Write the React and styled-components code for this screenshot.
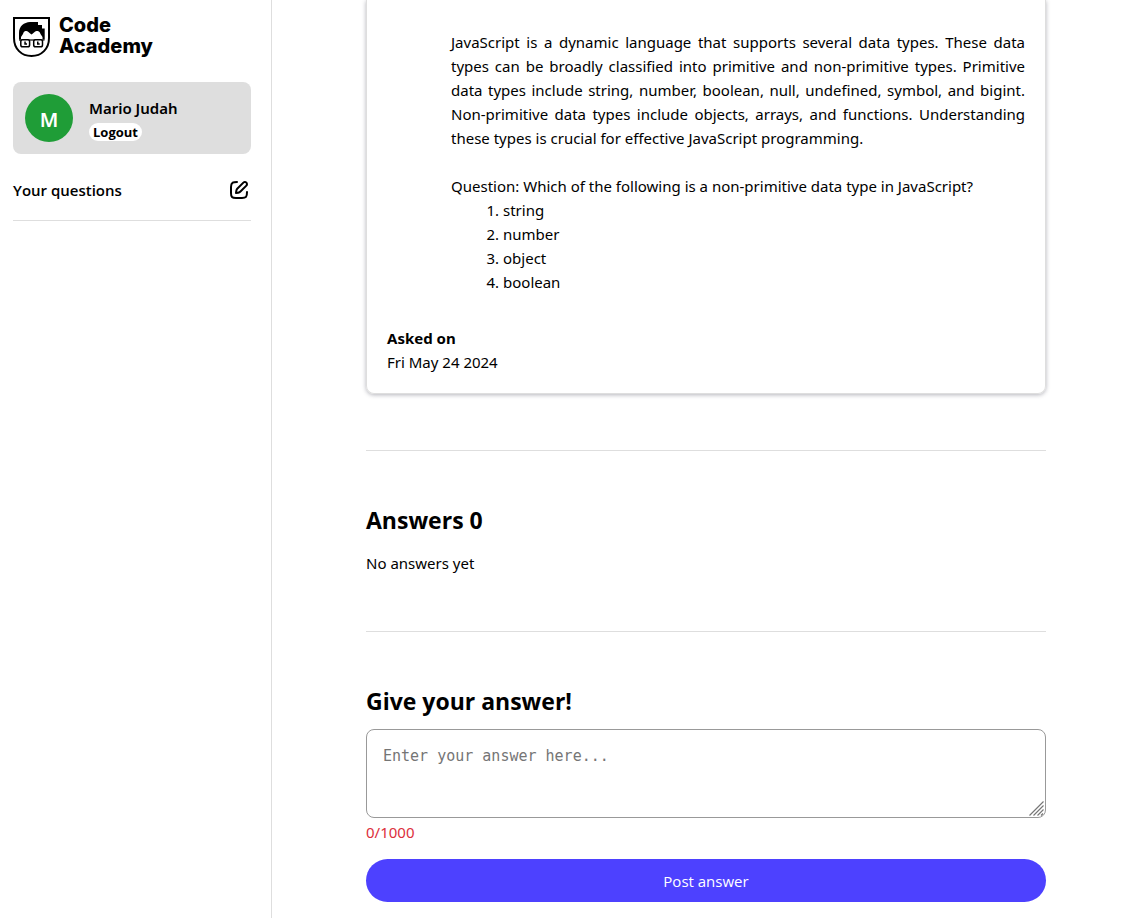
import React, { useState } from "react";
import styled, { createGlobalStyle } from "styled-components";

const GlobalStyle = createGlobalStyle`
  *, *::before, *::after { box-sizing: border-box; }
  body {
    margin: 0;
    background: #fff;
    color: #000;
    font-family: "Segoe UI", "Noto Sans", "Open Sans", sans-serif;
    font-size: 15px;
    line-height: 24px;
  }
  h2, p, ol { margin: 0; }
  button { font-family: inherit; cursor: pointer; }
`;

const headingFont = `"Segoe UI", "Open Sans", "Noto Sans", sans-serif`;

const Page = styled.div`
  display: grid;
  grid-template-columns: 272px 1fr;
  min-height: 100vh;
`;

const Sidebar = styled.aside`
  padding: 15px 20px 0 13px;
  border-right: 1px solid #dedede;
`;

const Brand = styled.a`
  display: flex;
  align-items: flex-start;
  gap: 9px;
  height: 43px;
  color: #000;
  text-decoration: none;

  svg { margin-top: 1px; }
`;

const BrandName = styled.span`
  font-family: Inter, "Liberation Sans", sans-serif;
  font-size: 20px;
  font-weight: 800;
  line-height: 21px;
`;

const UserCard = styled.section`
  display: flex;
  align-items: center;
  gap: 16px;
  margin-top: 24px;
  padding: 12px;
  border-radius: 8px;
  background: #dedede;
`;

const Avatar = styled.span`
  display: flex;
  align-items: center;
  justify-content: center;
  width: 48px;
  height: 48px;
  padding-top: 3px;
  border-radius: 50%;
  background: #1f9d37;
  color: #fff;
  font-size: 20px;
  font-weight: 600;
`;

const UserInfo = styled.div`
  display: flex;
  flex-direction: column;
  align-items: flex-start;
  gap: 4px;
  padding-top: 1px;
`;

const UserName = styled.span`
  font-weight: 600;
  line-height: 22px;
`;

const LogoutButton = styled.button`
  padding: 0 4px;
  border: 0;
  border-radius: 9px;
  background: #fff;
  color: #000;
  font-family: ${headingFont};
  font-size: 13px;
  font-weight: 700;
  line-height: 18px;
`;

const QuestionsHeader = styled.div`
  display: flex;
  align-items: center;
  justify-content: space-between;
  margin-top: 24px;
  padding-bottom: 18px;
  border-bottom: 1px solid #dedede;
`;

const SectionLabel = styled.span`
  font-family: ${headingFont};
  font-weight: 600;
`;

const IconButton = styled.button`
  display: flex;
  padding: 0;
  border: 0;
  background: none;
  color: #000;
`;

const Main = styled.main`
  padding: 0 23px 16px 24px;
`;

const Content = styled.div`
  max-width: 680px;
  margin: 0 auto;
`;

const QuestionCard = styled.article`
  padding: 30px 20px 19px;
  border: 1px solid #dedede;
  border-top: 0;
  border-radius: 0 0 8px 8px;
  box-shadow: 0 1px 4px rgba(40, 40, 60, 0.35);
`;

const QuestionBody = styled.div`
  display: flex;
  flex-direction: column;
  padding-left: 64px;
  text-align: justify;
`;

const Prompt = styled.p`
  margin-top: 24px;
`;

const Options = styled.ol`
  padding-left: 52px;
`;

const Asked = styled.p`
  display: flex;
  flex-direction: column;
  margin-top: 32px;
`;

const Divider = styled.hr`
  margin: 56px 0;
  border: 0;
  border-top: 1px solid #dedede;
`;

const Heading = styled.h2`
  margin-bottom: 18px;
  font-family: ${headingFont};
  font-size: 23px;
  font-weight: 700;
  line-height: 26px;
`;

const AnswerForm = styled.form`
  display: flex;
  flex-direction: column;
`;

const AnswerLabel = styled.label`
  margin-bottom: 15px;
  font-family: ${headingFont};
  font-size: 23px;
  font-weight: 700;
  line-height: 26px;
`;

const AnswerField = styled.div`
  position: relative;
  display: flex;
`;

const AnswerInput = styled.textarea`
  width: 100%;
  height: 89px;
  padding: 16px;
  border: 1px solid #999;
  border-radius: 8px;
  background: #fff;
  color: #000;
  font-family: Consolas, "DejaVu Sans Mono", monospace;
  font-size: 15px;
  line-height: 20px;
  resize: vertical;
  &::placeholder { color: #757575; }
  &::-webkit-resizer { background: transparent; }
`;

const Grip = styled.svg`
  position: absolute;
  right: 2px;
  bottom: 2px;
  pointer-events: none;
`;

const Counter = styled.span`
  margin: 2px 0 15px;
  color: #dc2f3c;
`;

const SubmitButton = styled.button`
  height: 43px;
  border: 0;
  border-radius: 22px;
  background: #4d41ff;
  color: #fff;
  font-family: ${headingFont};
  font-size: 15px;
`;

const options = ["string", "number", "object", "boolean"];

function Shield() {
  return (
    <svg width="37" height="41" viewBox="0 0 37 41" fill="none" aria-hidden="true">
      <path d="M1 2H36V22C36 33 28.500 40 18.500 40S1 33 1 22Z" stroke="#000" strokeWidth="2" />
      <path
        d="M6 23.500V17C6 10 11 6.500 17 6H25V9H29V12.500H31.700V23.500H29.500V21L27.500 18C27 15.500 25 15 23.500 15C21.500 15 20.500 17.500 18.500 18.500C16.500 17.500 15.500 15 13.500 15C12 15 10.500 15.500 10 18L8 21V23.500Z"
        fill="#000"
      />
      <path d="M6 24H31.500" stroke="#000" strokeWidth="1.200" />
      <rect x="7.800" y="23.800" width="8.800" height="7" rx="1.800" fill="#fff" stroke="#000" strokeWidth="1.500" />
      <rect x="20.700" y="23.800" width="8.800" height="7" rx="1.800" fill="#fff" stroke="#000" strokeWidth="1.500" />
      <path d="M11.300 25.500V28.800H14V27.300H12.800V25.500ZM24 25.500V28.800H26.700V27.300H25.500V25.500Z" fill="#000" />
    </svg>
  );
}

function ComposeIcon() {
  return (
    <svg width="24" height="24" viewBox="0 0 24 24" aria-hidden="true">
      <path
        fill="currentColor"
        fillRule="evenodd"
        d="M15.673 3.913C16.892 2.694 18.868 2.694 20.087 3.913C21.306 5.132 21.306 7.108 20.087 8.327L14.15 14.264C13.385 15.029 12.393 15.526 11.322 15.679L9.141 15.99C8.83 16.034 8.515 15.93 8.293 15.707C8.07 15.485 7.966 15.17 8.01 14.859L8.321 12.679C8.474 11.608 8.971 10.615 9.736 9.85L15.673 3.913ZM18.673 5.327C18.235 4.889 17.525 4.889 17.087 5.327L11.15 11.264C10.691 11.723 10.393 12.319 10.301 12.961L10.179 13.822L11.039 13.699C11.681 13.607 12.277 13.309 12.736 12.85L18.673 6.913C19.111 6.475 19.111 5.765 18.673 5.327Z"
      />
      <path
        d="M10 4C6.500 4 4 4.200 4 9V15C4 19 5 20 9 20H15C19 20 20 19 20 14"
        fill="none"
        stroke="currentColor"
        strokeWidth="2"
        strokeLinecap="round"
      />
    </svg>
  );
}

export default function App() {
  const [answer, setAnswer] = useState("");

  return (
    <>
      <GlobalStyle />
      <Page>
        <Sidebar>
          <Brand href="#">
            <Shield />
            <BrandName>
              Code
              <br />
              Academy
            </BrandName>
          </Brand>
          <UserCard>
            <Avatar>M</Avatar>
            <UserInfo>
              <UserName>Mario Judah</UserName>
              <LogoutButton type="button">Logout</LogoutButton>
            </UserInfo>
          </UserCard>
          <QuestionsHeader>
            <SectionLabel>Your questions</SectionLabel>
            <IconButton type="button" aria-label="New question">
              <ComposeIcon />
            </IconButton>
          </QuestionsHeader>
        </Sidebar>
        <Main>
          <Content>
            <QuestionCard>
              <QuestionBody>
                <p>
                  JavaScript is a dynamic language that supports several data types. These data types can be
                  broadly classified into primitive and non-primitive types. Primitive data types include
                  string, number, boolean, null, undefined, symbol, and bigint. Non-primitive data types
                  include objects, arrays, and functions. Understanding these types is crucial for effective
                  JavaScript programming.
                </p>
                <Prompt>Question: Which of the following is a non-primitive data type in JavaScript?</Prompt>
                <Options>
                  {options.map((option) => (
                    <li key={option}>{option}</li>
                  ))}
                </Options>
              </QuestionBody>
              <Asked>
                <strong>Asked on</strong>
                <span>Fri May 24 2024</span>
              </Asked>
            </QuestionCard>
            <Divider />
            <section>
              <Heading>Answers 0</Heading>
              <p>No answers yet</p>
            </section>
            <Divider />
            <AnswerForm onSubmit={(event) => event.preventDefault()}>
              <AnswerLabel htmlFor="answer">Give your answer!</AnswerLabel>
              <AnswerField>
                <AnswerInput
                  id="answer"
                  maxLength={1000}
                  placeholder="Enter your answer here..."
                  value={answer}
                  onChange={(event) => setAnswer(event.target.value)}
                />
                <Grip width="15" height="15" viewBox="0 0 15 15" aria-hidden="true">
                  <path
                    d="M0.500 14.500L14.500 0.500M4.500 14.500L14.500 4.500M8.500 14.500L14.500 8.500M12 14.500L14 12.500"
                    stroke="#777"
                    strokeWidth="1.200"
                  />
                </Grip>
              </AnswerField>
              <Counter>{answer.length}/1000</Counter>
              <SubmitButton type="submit">Post answer</SubmitButton>
            </AnswerForm>
          </Content>
        </Main>
      </Page>
    </>
  );
}
